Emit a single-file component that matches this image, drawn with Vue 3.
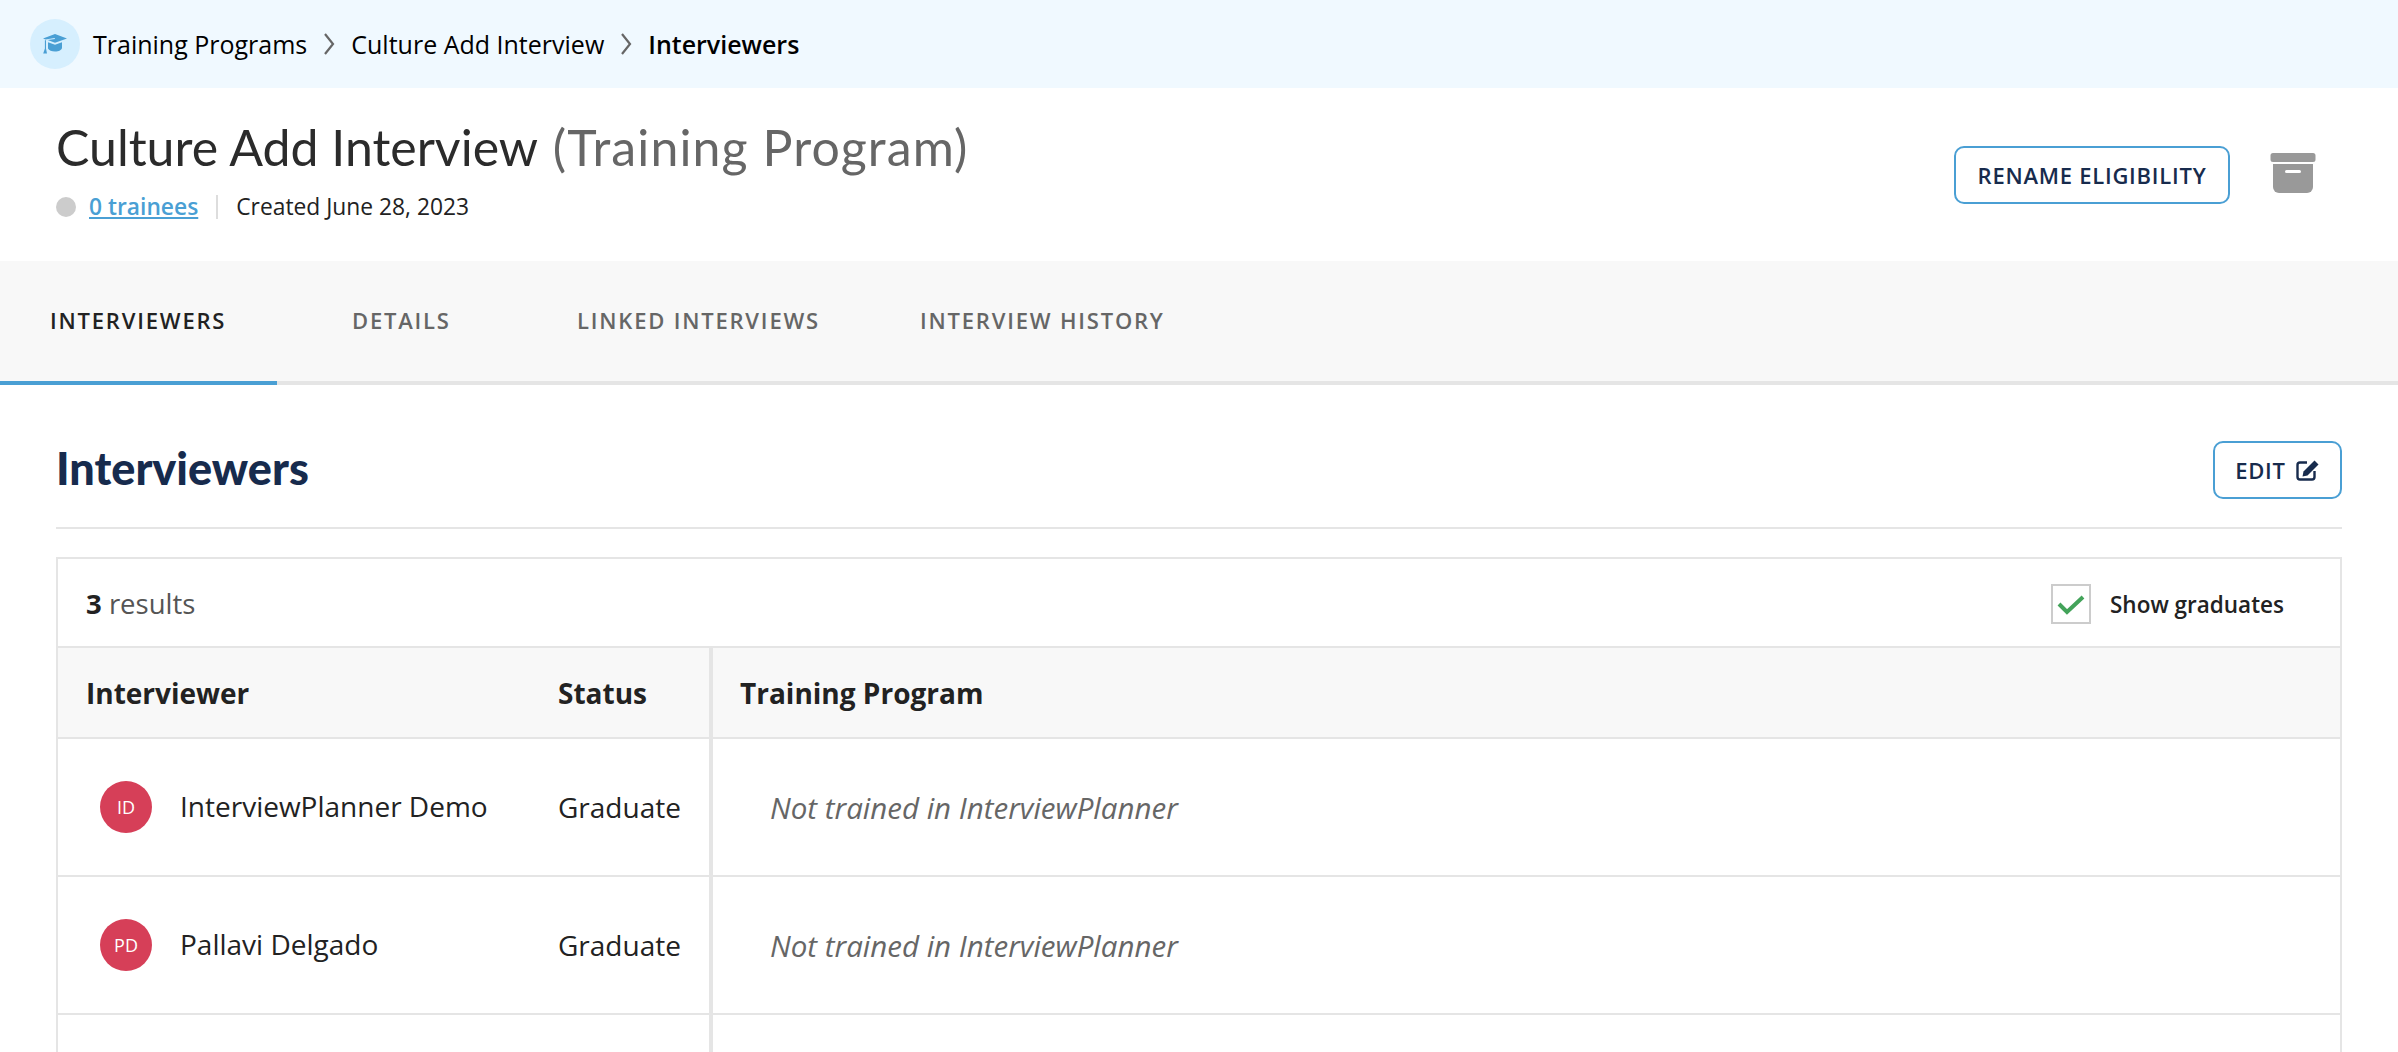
<script setup>
const tabs = [
  { label: 'INTERVIEWERS', cls: 'tab-a' },
  { label: 'DETAILS', cls: 'tab-b' },
  { label: 'LINKED INTERVIEWS', cls: 'tab-c' },
  { label: 'INTERVIEW HISTORY', cls: 'tab-d' }
]
const rows = [
  { initials: 'ID', name: 'InterviewPlanner Demo', status: 'Graduate', program: 'Not trained in InterviewPlanner' },
  { initials: 'PD', name: 'Pallavi Delgado', status: 'Graduate', program: 'Not trained in InterviewPlanner' },
  { initials: '', name: '', status: '', program: '' }
]
</script>

<template>
  <div class="page">
    <nav class="crumbs">
      <span class="crumb-icon">
        <svg width="26" height="22" viewBox="0 0 26 22">
          <path fill="#4a9fd4" d="M13 1 25 5.4 13 9.800 5.600 7.100 13 5.900 12.600 5 3.600 6.400 1 5.400Z" />
          <path fill="#4a9fd4" d="M6 9.200 13 11.800 20 9.200V14.500C20 17 16.800 18.500 13 18.500 9.600 18.500 7 17.400 6 15.600Z" />
          <path fill="#4a9fd4" d="M2.900 7.200H4V15.500L5 20.500H1.200L2.900 15.500Z" />
        </svg>
      </span>
      <span class="crumb">Training Programs</span>
      <svg class="chev" width="12" height="24" viewBox="0 0 12 24"><path d="M2 2 10 12 2 22" fill="none" stroke="#666" stroke-width="2.200" /></svg>
      <span class="crumb">Culture Add Interview</span>
      <svg class="chev" width="12" height="24" viewBox="0 0 12 24"><path d="M2 2 10 12 2 22" fill="none" stroke="#666" stroke-width="2.200" /></svg>
      <span class="crumb current">Interviewers</span>
    </nav>

    <header class="head">
      <div>
        <h1 class="title">Culture Add Interview <span class="muted">(Training Program)</span></h1>
        <div class="meta">
          <span class="dot"></span>
          <a class="link">0 trainees</a>
          <span class="sep"></span>
          <span>Created June 28, 2023</span>
        </div>
      </div>
      <div class="head-actions">
        <button class="btn rename">RENAME ELIGIBILITY</button>
        <svg class="archive" width="46" height="42" viewBox="0 0 46 42">
          <path fill="#999" d="M3 0H43A2.500 2.500 0 0 1 45.500 2.500V6.500A2.500 2.500 0 0 1 43 9H3A2.500 2.500 0 0 1 .5 6.500V2.500A2.500 2.500 0 0 1 3 0Z" />
          <path fill="#999" d="M3 11H43V34A6 6 0 0 1 37 40H9A6 6 0 0 1 3 34Z" />
          <rect x="15" y="17" width="16" height="3" rx="1.500" fill="#fff" />
        </svg>
      </div>
    </header>

    <div class="tabs">
      <div v-for="(t, i) in tabs" :key="t.label" class="tab" :class="[t.cls, { active: i === 0 }]">{{ t.label }}</div>
    </div>

    <section class="body">
      <div class="section-head">
        <h2 class="section-title">Interviewers</h2>
        <button class="btn edit">
          EDIT
          <svg width="24" height="22" viewBox="0 0 24 22">
            <path fill="none" stroke="#172b4d" stroke-width="2.400" d="M11 3.500H4A2.500 2.500 0 0 0 1.500 6V18A2.500 2.500 0 0 0 4 20.500H16A2.500 2.500 0 0 0 18.500 18V12" />
            <path fill="#172b4d" d="M18.500 1.500 22.500 5.500 11.500 16.500 6.500 17.500 7.500 12.500Z" />
          </svg>
        </button>
      </div>

      <div class="table">
        <div class="toolbar">
          <div class="count"><b>3</b> results</div>
          <label class="show">
            <span class="check">
              <svg width="28" height="22" viewBox="0 0 28 22"><path d="M2 11 10 19 26 4" fill="none" stroke="#43a35a" stroke-width="4" /></svg>
            </span>
            <span class="show-text">Show graduates</span>
          </label>
        </div>
        <div class="row header">
          <div class="c1">Interviewer</div>
          <div class="c2">Status</div>
          <div class="c3">Training Program</div>
        </div>
        <div v-for="(r, i) in rows" :key="i" class="row">
          <div class="c1 person">
            <span v-if="r.initials" class="avatar">{{ r.initials }}</span>
            <span class="name">{{ r.name }}</span>
          </div>
          <div class="c2">{{ r.status }}</div>
          <div class="c3 program">{{ r.program }}</div>
        </div>
      </div>
    </section>
  </div>
</template>

<style>
html, body { margin: 0; height: 100%; overflow: hidden; background: #fff; }
</style>

<style scoped>
.page { width: 2398px; height: 1052px; overflow: hidden; background: #fff; font-family: "Open Sans", sans-serif; color: #222; }
.crumbs { height: 88px; background: #f0f9ff; display: flex; align-items: center; padding-left: 30px; box-sizing: border-box; }
.crumb-icon { width: 50px; height: 50px; border-radius: 50%; background: #d6effe; display: flex; align-items: center; justify-content: center; margin-right: 13px; }
.crumb { font-size: 25px; color: #000; }
.current { font-weight: 600; }
.chev { margin: 0 16px; }
.head { height: 173px; box-sizing: border-box; padding: 29px 56px 0; display: flex; justify-content: space-between; }
.title { margin: 0; font-family: Lato, sans-serif; font-weight: 400; font-size: 50px; line-height: 60px; color: #2b2b2b; white-space: nowrap; }
.muted { color: #666; letter-spacing: 1.100px; margin-left: 3px; }
.meta { display: flex; align-items: center; font-size: 22.800px; margin-top: 14px; color: #222; }
.dot { width: 20px; height: 20px; border-radius: 50%; background: #ccc; margin-right: 13px; }
.link { color: #4a9fd4; font-weight: 600; text-decoration: underline; }
.sep { width: 2px; height: 24px; background: #ddd; margin: 0 18px; }
.head-actions { display: flex; align-items: flex-start; padding-top: 29px; }
.btn { box-sizing: border-box; height: 58px; background: #fff; border: 2px solid #4a9fd4; border-radius: 10px; font-family: "Open Sans", sans-serif; font-weight: 600; font-size: 22px; letter-spacing: .75px; color: #172b4d; display: flex; align-items: center; justify-content: center; padding: 0; }
.rename { width: 276px; }
.archive { margin: 7px 26px 0 40px; }
.tabs { height: 124px; box-sizing: border-box; background: #f8f8f8; border-bottom: 4px solid #e5e5e5; display: flex; }
.tab { box-sizing: border-box; height: 124px; padding-top: 44px; font-size: 22px; font-weight: 600; letter-spacing: 1.800px; color: #666; white-space: nowrap; }
.tab-a { width: 277px; padding-left: 50px; color: #222; border-bottom: 4px solid #4a9fd4; }
.tab-b { width: 225px; padding-left: 75px; }
.tab-c { width: 345px; padding-left: 75px; }
.tab-d { padding-left: 73px; }
.body { padding: 0 56px; }
.section-head { height: 144px; box-sizing: border-box; border-bottom: 2px solid #e5e5e5; display: flex; justify-content: space-between; align-items: center; padding-top: 28px; }
.section-title { margin: -5px 0 0; font-family: Lato, sans-serif; font-weight: 900; font-size: 45px; line-height: 50px; color: #172b4d; }
.edit { width: 129px; gap: 10px; }
.table { margin-top: 28px; border: 2px solid #e5e5e5; border-bottom: 0; }
.toolbar { height: 87px; display: flex; justify-content: space-between; align-items: center; padding: 0 56px 0 28px; border-bottom: 2px solid #e5e5e5; }
.count { font-size: 27.500px; color: #555; padding-top: 2px; }
.count b { color: #222; }
.show { display: flex; align-items: center; font-size: 22.500px; font-weight: 600; color: #222; padding-top: 2px; }
.show-text { padding-top: 2px; }
.check { box-sizing: border-box; width: 40px; height: 40px; border: 2px solid #ccc; display: flex; align-items: center; justify-content: center; margin-right: 19px; }
.row { display: grid; grid-template-columns: 500px 151px 4px 1fr; height: 136px; border-bottom: 2px solid #e5e5e5; font-size: 28px; color: #222; }
.row > div { display: flex; align-items: center; white-space: nowrap; }
.c1 { padding-left: 28px; }
.c3 { grid-column: 4; padding-left: 27px; }
.row::before { content: ""; grid-column: 3; grid-row: 1; background: #e5e5e5; }
.c1, .c2, .c3 { grid-row: 1; }
.header { height: 89px; background: #f8f8f8; font-weight: 700; }
.person { padding-left: 42px; gap: 28px; }
.avatar { width: 52px; height: 52px; border-radius: 50%; background: #d63f58; color: #fff; font-size: 18px; display: flex; align-items: center; justify-content: center; flex: none; }
.name { margin-top: -2px; }
.row > .program { padding-left: 57px; font-style: italic; color: #666; font-size: 29.500px; }
</style>
